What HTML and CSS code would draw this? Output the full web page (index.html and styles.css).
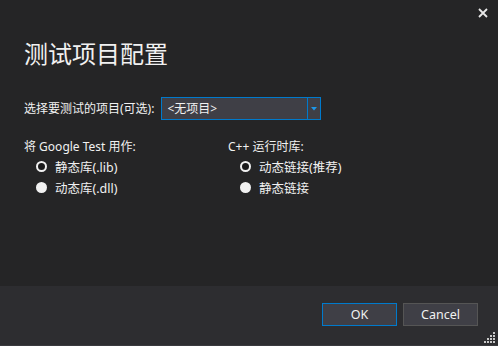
FILE: index.html
```html
<!DOCTYPE html>
<html lang="zh-CN">
<head>
    <meta charset="UTF-8">
    <title>测试项目配置</title>
    <link rel="stylesheet" href="styles.css">
</head>
<body>
    <div class="dialog">
        <button class="close-btn" title="关闭">
            <svg width="10" height="10" viewBox="0 0 10 10">
                <path d="M1 1 L9 9 M9 1 L1 9" stroke="#e8e8e8" stroke-width="1.8"/>
            </svg>
        </button>
        <div class="content">
            <h1 class="title">测试项目配置</h1>
            <div class="project-row">
                <label class="label">选择要测试的项目(可选):</label>
                <div class="combo">
                    <span class="combo-text">&lt;无项目&gt;</span>
                    <span class="combo-arrow">
                        <svg width="6" height="4" viewBox="0 0 6 4"><path d="M0 0 H6 L3 3.5 Z" fill="#1c97ea"/></svg>
                    </span>
                </div>
            </div>
            <div class="options">
                <div class="group group-left">
                    <div class="label">将 Google Test 用作:</div>
                    <div class="radio checked"><span class="dot"></span>静态库(.lib)</div>
                    <div class="radio"><span class="dot"></span>动态库(.dll)</div>
                </div>
                <div class="group">
                    <div class="label">C++ 运行时库:</div>
                    <div class="radio checked"><span class="dot"></span>动态链接(推荐)</div>
                    <div class="radio"><span class="dot"></span>静态链接</div>
                </div>
            </div>
        </div>
        <div class="footer">
            <button class="btn btn-default">OK</button>
            <button class="btn">Cancel</button>
            <svg class="grip" width="12" height="12" viewBox="0 0 12 12">
                <rect x="9" y="1" width="2" height="2" fill="#c8c8c8"/>
                <rect x="6" y="4" width="2" height="2" fill="#c8c8c8"/>
                <rect x="9" y="4" width="2" height="2" fill="#c8c8c8"/>
                <rect x="3" y="7" width="2" height="2" fill="#c8c8c8"/>
                <rect x="6" y="7" width="2" height="2" fill="#c8c8c8"/>
                <rect x="9" y="7" width="2" height="2" fill="#c8c8c8"/>
                <rect x="0" y="10" width="2" height="2" fill="#c8c8c8"/>
                <rect x="3" y="10" width="2" height="2" fill="#c8c8c8"/>
                <rect x="6" y="10" width="2" height="2" fill="#c8c8c8"/>
                <rect x="9" y="10" width="2" height="2" fill="#c8c8c8"/>
            </svg>
        </div>
    </div>
</body>
</html>
```
FILE: styles.css
```css
body {
    margin: 0;
    background: #252526;
    font-family: "Noto Sans", "Noto Sans CJK SC", sans-serif;
    color: #f1f1f1;
    font-size: 12px;
}

.dialog {
    position: relative;
    width: 498px;
    height: 346px;
    display: flex;
    flex-direction: column;
    overflow: hidden;
}

.close-btn {
    position: absolute;
    top: 8px;
    right: 10px;
    width: 10px;
    height: 10px;
    padding: 0;
    border: none;
    background: none;
    display: flex;
}

.content {
    flex: 1;
    padding: 38px 24px 0 24px;
}

.title {
    margin: 0;
    font-size: 24px;
    font-weight: normal;
    line-height: 32px;
}

.project-row {
    display: flex;
    align-items: center;
    gap: 6px;
    margin-top: 27px;
}

.label {
    line-height: 18px;
}

.combo {
    display: flex;
    width: 158px;
    height: 21px;
    margin-left: 1px;
    border: 1px solid #007acc;
    background: #3f3f46;
}

.combo-text {
    flex: 1;
    padding-left: 5px;
    line-height: 21px;
}

.combo-arrow {
    width: 12px;
    border-left: 1px solid #007acc;
    display: flex;
    align-items: center;
    justify-content: center;
}

.options {
    display: flex;
    margin-top: 18px;
}

.group-left {
    width: 204px;
}

.radio {
    display: flex;
    align-items: center;
    gap: 8px;
    height: 21px;
    padding-left: 12px;
    font-size: 12.5px;
}

.radio .dot {
    width: 11px;
    height: 11px;
    border-radius: 50%;
    background: #f1f1f1;
    box-sizing: border-box;
}

.radio.checked .dot {
    background: #1b1b1c;
    border: 2.5px solid #f1f1f1;
}

.footer {
    position: relative;
    height: 60px;
    background: #2d2d30;
    border-bottom: 1px solid #3a3a3e;
    display: flex;
    justify-content: flex-end;
    align-items: flex-start;
    gap: 6px;
    padding: 17px 20px 0 0;
    box-sizing: border-box;
}

.btn {
    width: 75px;
    height: 23px;
    background: #3f3f46;
    border: 1px solid #555555;
    color: #f1f1f1;
    font-family: "Noto Sans", "Noto Sans CJK SC", sans-serif;
    font-size: 12.5px;
    padding: 0;
}

.btn-default {
    border-color: #007acc;
}

.grip {
    position: absolute;
    right: 2px;
    bottom: 2px;
}
```
